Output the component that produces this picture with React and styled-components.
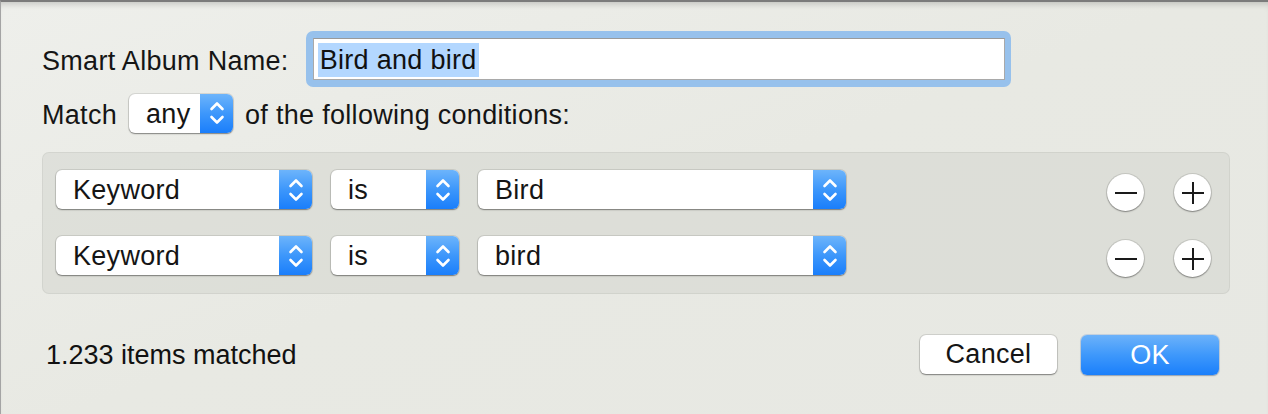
import styled, { createGlobalStyle } from 'styled-components';

const GlobalStyle = createGlobalStyle`
  html, body {
    margin: 0;
    padding: 0;
  }
  body {
    font-family: "Liberation Sans", Arial, sans-serif;
    color: #1a1a1a;
  }
`;

const rows = [
  { field: 'Keyword', op: 'is', value: 'Bird' },
  { field: 'Keyword', op: 'is', value: 'bird' },
];

const Chevrons = () => (
  <svg width="16" height="26" viewBox="0 0 16 26">
    <path d="M2.5 9 L8 3.5 L13.5 9" fill="none" stroke="#fff" strokeWidth="2.6" strokeLinecap="round" strokeLinejoin="round" />
    <path d="M2.5 17 L8 22.5 L13.5 17" fill="none" stroke="#fff" strokeWidth="2.6" strokeLinecap="round" strokeLinejoin="round" />
  </svg>
);

const Popup = ({ width, children }) => (
  <PopupBox $width={width}>
    <PopupLabel>{children}</PopupLabel>
    <PopupArrows>
      <Chevrons />
    </PopupArrows>
  </PopupBox>
);

const App = () => {
  return (
    <>
      <GlobalStyle />
      <Window>
        <NameRow>
          <Label>Smart Album Name:</Label>
          <FocusRing>
            <NameField>
              <Selected>Bird and bird</Selected>
            </NameField>
          </FocusRing>
        </NameRow>
        <MatchRow>
          <Label>Match</Label>
          <Popup width={104}>any</Popup>
          <Label>of the following conditions:</Label>
        </MatchRow>
        <Panel>
          {rows.map((row, i) => (
            <ConditionRow key={i}>
              <Popup width={256}>{row.field}</Popup>
              <Popup width={128}>{row.op}</Popup>
              <Popup width={368}>{row.value}</Popup>
              <RoundButtons>
                <RoundButton>
                  <svg width="24" height="24" viewBox="0 0 24 24">
                    <path d="M1 12 H23" stroke="#1a1a1a" strokeWidth="2" />
                  </svg>
                </RoundButton>
                <RoundButton>
                  <svg width="24" height="24" viewBox="0 0 24 24">
                    <path d="M1 12 H23 M12 1 V23" stroke="#1a1a1a" strokeWidth="2" />
                  </svg>
                </RoundButton>
              </RoundButtons>
            </ConditionRow>
          ))}
        </Panel>
        <Footer>
          <Matched>1.233 items matched</Matched>
          <Buttons>
            <CancelButton>Cancel</CancelButton>
            <OkButton>OK</OkButton>
          </Buttons>
        </Footer>
      </Window>
    </>
  );
};

const Window = styled.div`
  width: 1268px;
  height: 414px;
  box-sizing: border-box;
  border-top: 2px solid #7b7b7b;
  border-left: 1px solid #a4a4a4;
  background: linear-gradient(160deg, #eeefeb 0%, #e8e9e3 50%, #e7e8e3 100%);
  box-shadow: inset 0 6px 6px -4px rgba(0, 0, 0, 0.18);
  padding: 29px 0 0 41px;
  display: flex;
  flex-direction: column;
  overflow: hidden;
`;

const Label = styled.span`
  font-size: 27px;
  letter-spacing: 0.3px;
  line-height: 30px;
  padding-top: 3px;
  color: #151515;
  white-space: nowrap;
`;

const NameRow = styled.div`
  display: flex;
  align-items: center;
  gap: 17px;
  height: 56px;
`;

const FocusRing = styled.div`
  width: 705px;
  height: 56px;
  box-sizing: border-box;
  padding: 7px 6px 7px 7px;
  background: #97c1ec;
  border-radius: 7px;
`;

const NameField = styled.div`
  height: 42px;
  box-sizing: border-box;
  background: #fff;
  border: 1px solid #a9a9a9;
  border-top-color: #9a9a9a;
  padding: 4px 4px 2px;
  display: flex;
  align-items: center;
`;

const Selected = styled.span`
  background: #b3d7ff;
  font-size: 27px;
  letter-spacing: 0.3px;
  line-height: 34px;
  padding: 0 2px;
  color: #111;
`;

const MatchRow = styled.div`
  display: flex;
  align-items: center;
  gap: 12px;
  margin-top: 6px;
  height: 40px;
`;

const PopupBox = styled.div`
  width: ${(p) => p.$width}px;
  height: 39px;
  display: flex;
  background: #fff;
  border-radius: 6px;
  box-shadow: 0 0 0 1px rgba(0, 0, 0, 0.09), 0 1px 1.5px rgba(0, 0, 0, 0.4);
  overflow: hidden;
  flex-shrink: 0;
`;

const PopupLabel = styled.div`
  flex: 1;
  padding-left: 17px;
  font-size: 27px;
  letter-spacing: 0.3px;
  line-height: 41px;
  color: #151515;
  white-space: nowrap;
`;

const PopupArrows = styled.div`
  width: 33px;
  display: flex;
  align-items: center;
  justify-content: center;
  background: linear-gradient(180deg, #6db4fb 0%, #3d97fb 50%, #1a7efb 100%);
`;

const Panel = styled.div`
  margin-top: 19px;
  width: 1188px;
  height: 142px;
  box-sizing: border-box;
  background: rgba(205, 207, 199, 0.42);
  border: 1px solid rgba(0, 0, 0, 0.05);
  border-radius: 7px;
  padding: 17px 18px 0 13px;
  display: flex;
  flex-direction: column;
  gap: 27px;
`;

const ConditionRow = styled.div`
  display: flex;
  align-items: center;
  gap: 19px;
  height: 39px;
`;

const RoundButtons = styled.div`
  margin-left: auto;
  display: flex;
  gap: 30px;
  padding-top: 6px;
`;

const RoundButton = styled.div`
  width: 37px;
  height: 37px;
  border-radius: 50%;
  background: #fff;
  box-shadow: 0 0 0 1px rgba(0, 0, 0, 0.1), 0 1px 1.5px rgba(0, 0, 0, 0.35);
  display: flex;
  align-items: center;
  justify-content: center;
`;

const Footer = styled.div`
  margin-top: 41px;
  display: flex;
  align-items: center;
  height: 40px;
  padding-right: 49px;
`;

const Matched = styled.span`
  font-size: 27px;
  padding-left: 4px;
  color: #111;
`;

const Buttons = styled.div`
  margin-left: auto;
  display: flex;
  gap: 24px;
`;

const CancelButton = styled.button`
  width: 137px;
  height: 39px;
  border: none;
  border-radius: 6px;
  background: #fff;
  box-shadow: 0 0 0 1px rgba(0, 0, 0, 0.1), 0 1px 1.5px rgba(0, 0, 0, 0.4);
  font-family: "Liberation Sans", Arial, sans-serif;
  font-size: 27px;
  letter-spacing: 0.3px;
  color: #151515;
  padding: 0;
`;

const OkButton = styled.button`
  width: 138px;
  height: 40px;
  border: none;
  border-radius: 6px;
  background: linear-gradient(180deg, #6cb2fa 0%, #3e98fb 50%, #1a7ffb 100%);
  box-shadow: 0 0 0 1px rgba(0, 80, 200, 0.15), 0 1px 1.5px rgba(0, 0, 0, 0.25);
  font-family: "Liberation Sans", Arial, sans-serif;
  font-size: 27px;
  letter-spacing: 0.3px;
  color: #fff;
  padding: 0;
`;

export default App;
